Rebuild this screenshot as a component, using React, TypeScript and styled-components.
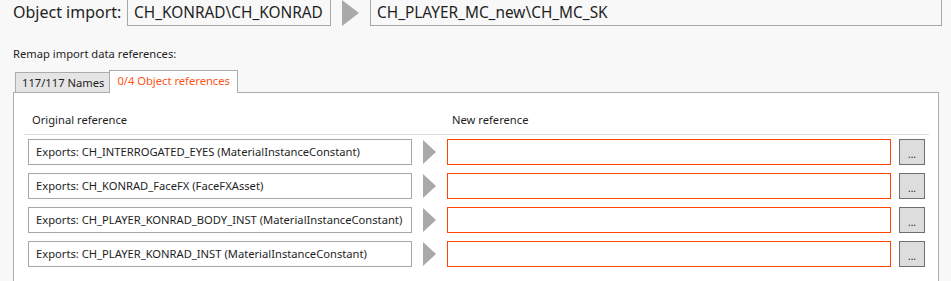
import styled, { createGlobalStyle } from 'styled-components';

const GlobalStyle = createGlobalStyle`
  body {
    margin: 0;
    background: #f8f8f8;
    font-family: 'Noto Sans', 'Open Sans', sans-serif;
    color: #1e1e1e;
    overflow: hidden;
  }
`;

const Page = styled.div`
  padding: 0 9px 0 13px;
`;

const TopRow = styled.div`
  display: flex;
  align-items: center;
  height: 27px;
  margin-top: -1px;
`;

const TopLabel = styled.div`
  width: 114px;
  font-size: 16px;
  line-height: 27px;
`;

const PathBox = styled.div<{ $width?: number }>`
  box-sizing: border-box;
  height: 27px;
  ${(p) => (p.$width ? `width: ${p.$width}px;` : 'flex: 1;')}
  border: 1px solid #a6a6a6;
  padding: 0 6px;
  font-size: 15.4px;
  line-height: 25px;
  white-space: nowrap;
  overflow: hidden;
`;

const Arrow = styled.svg<{ $gap: number }>`
  flex: none;
  margin: 0 ${(p) => p.$gap}px;
  display: block;
`;

const SectionLabel = styled.div`
  margin-top: 20px;
  font-size: 11.2px;
  line-height: 16px;
`;

const TabStrip = styled.div`
  display: flex;
  align-items: flex-end;
  height: 23px;
  margin-top: 8px;
  padding-left: 2px;
`;

const Tab = styled.div<{ $active?: boolean }>`
  box-sizing: border-box;
  height: ${(p) => (p.$active ? 23 : 21)}px;
  padding: 0 ${(p) => (p.$active ? 7 : 5)}px 0 ${(p) => (p.$active ? 7 : 6)}px;
  border: 1px solid #acacac;
  border-bottom: ${(p) => (p.$active ? 'none' : '1px solid #acacac')};
  margin-left: ${(p) => (p.$active ? '-1px' : '0')};
  background: ${(p) => (p.$active ? '#ffffff' : '#e5e5e5')};
  color: ${(p) => (p.$active ? '#ff5418' : '#1e1e1e')};
  font-size: 11.2px;
  line-height: 20px;
  position: relative;
  z-index: ${(p) => (p.$active ? 1 : 0)};
  white-space: nowrap;
`;

const Panel = styled.div`
  border: 1px solid #adadad;
  background: #ffffff;
  margin: -1px 3px 0 0;
  padding: 0 9px 20px 10px;
  height: 200px;
`;

const HeaderRow = styled.div`
  display: flex;
  height: 42px;
  align-items: flex-end;
  padding-bottom: 6px;
  box-sizing: border-box;
  border-bottom: 1px solid #dcdcdc;
  font-size: 11.2px;
  line-height: 16px;
`;

const HeaderCell = styled.div<{ $width?: number; $indent: number }>`
  padding-left: ${(p) => p.$indent}px;
  ${(p) => (p.$width ? `width: ${p.$width}px;` : 'flex: 1;')}
  box-sizing: border-box;
`;

const Rows = styled.div`
  display: flex;
  flex-direction: column;
  gap: 8px;
  padding: 4px 4px 0;
`;

const Row = styled.div`
  display: flex;
  align-items: center;
  height: 26px;
`;

const SourceBox = styled.div`
  box-sizing: border-box;
  width: 384px;
  height: 26px;
  border: 1px solid #a6a6a6;
  padding: 0 7px;
  font-size: 11.2px;
  line-height: 24px;
  white-space: nowrap;
  overflow: hidden;
`;

const TargetInput = styled.div`
  box-sizing: border-box;
  flex: 1;
  height: 26px;
  border: 1px solid #ff4500;
  background: #ffffff;
`;

const BrowseButton = styled.button`
  box-sizing: border-box;
  flex: none;
  width: 26px;
  height: 26px;
  margin-left: 8px;
  padding: 0 0 5px;
  border: 1px solid #707070;
  background: #dddddd;
  color: #1e1e1e;
  font-family: inherit;
  font-size: 10px;
  line-height: 10px;
  display: flex;
  justify-content: center;
  align-items: flex-end;
`;

const Triangle = ({ w, h, gap }: { w: number; h: number; gap: number }) => (
  <Arrow $gap={gap} width={w} height={h} viewBox={`0 0 ${w} ${h}`}>
    <polygon points={`0,0 ${w},${h / 2} 0,${h}`} fill="#a9a9a9" />
  </Arrow>
);

const references = [
  'Exports: CH_INTERROGATED_EYES (MaterialInstanceConstant)',
  'Exports: CH_KONRAD_FaceFX (FaceFXAsset)',
  'Exports: CH_PLAYER_KONRAD_BODY_INST (MaterialInstanceConstant)',
  'Exports: CH_PLAYER_KONRAD_INST (MaterialInstanceConstant)',
];

const App = () => (
  <>
    <GlobalStyle />
    <Page>
      <TopRow>
        <TopLabel>Object import:</TopLabel>
        <PathBox $width={204}>CH_KONRAD\CH_KONRAD</PathBox>
        <Triangle w={17} h={26} gap={11} />
        <PathBox>CH_PLAYER_MC_new\CH_MC_SK</PathBox>
      </TopRow>

      <SectionLabel>Remap import data references:</SectionLabel>
      <TabStrip>
        <Tab>117/117 Names</Tab>
        <Tab $active>0/4 Object references</Tab>
      </TabStrip>

      <Panel>
        <HeaderRow>
          <HeaderCell $width={424} $indent={8}>Original reference</HeaderCell>
          <HeaderCell $indent={4}>New reference</HeaderCell>
        </HeaderRow>
        <Rows>
          {references.map((ref) => (
            <Row key={ref}>
              <SourceBox>{ref}</SourceBox>
              <Triangle w={13} h={24} gap={11} />
              <TargetInput />
              <BrowseButton>...</BrowseButton>
            </Row>
          ))}
        </Rows>
      </Panel>
    </Page>
  </>
);

export default App;
